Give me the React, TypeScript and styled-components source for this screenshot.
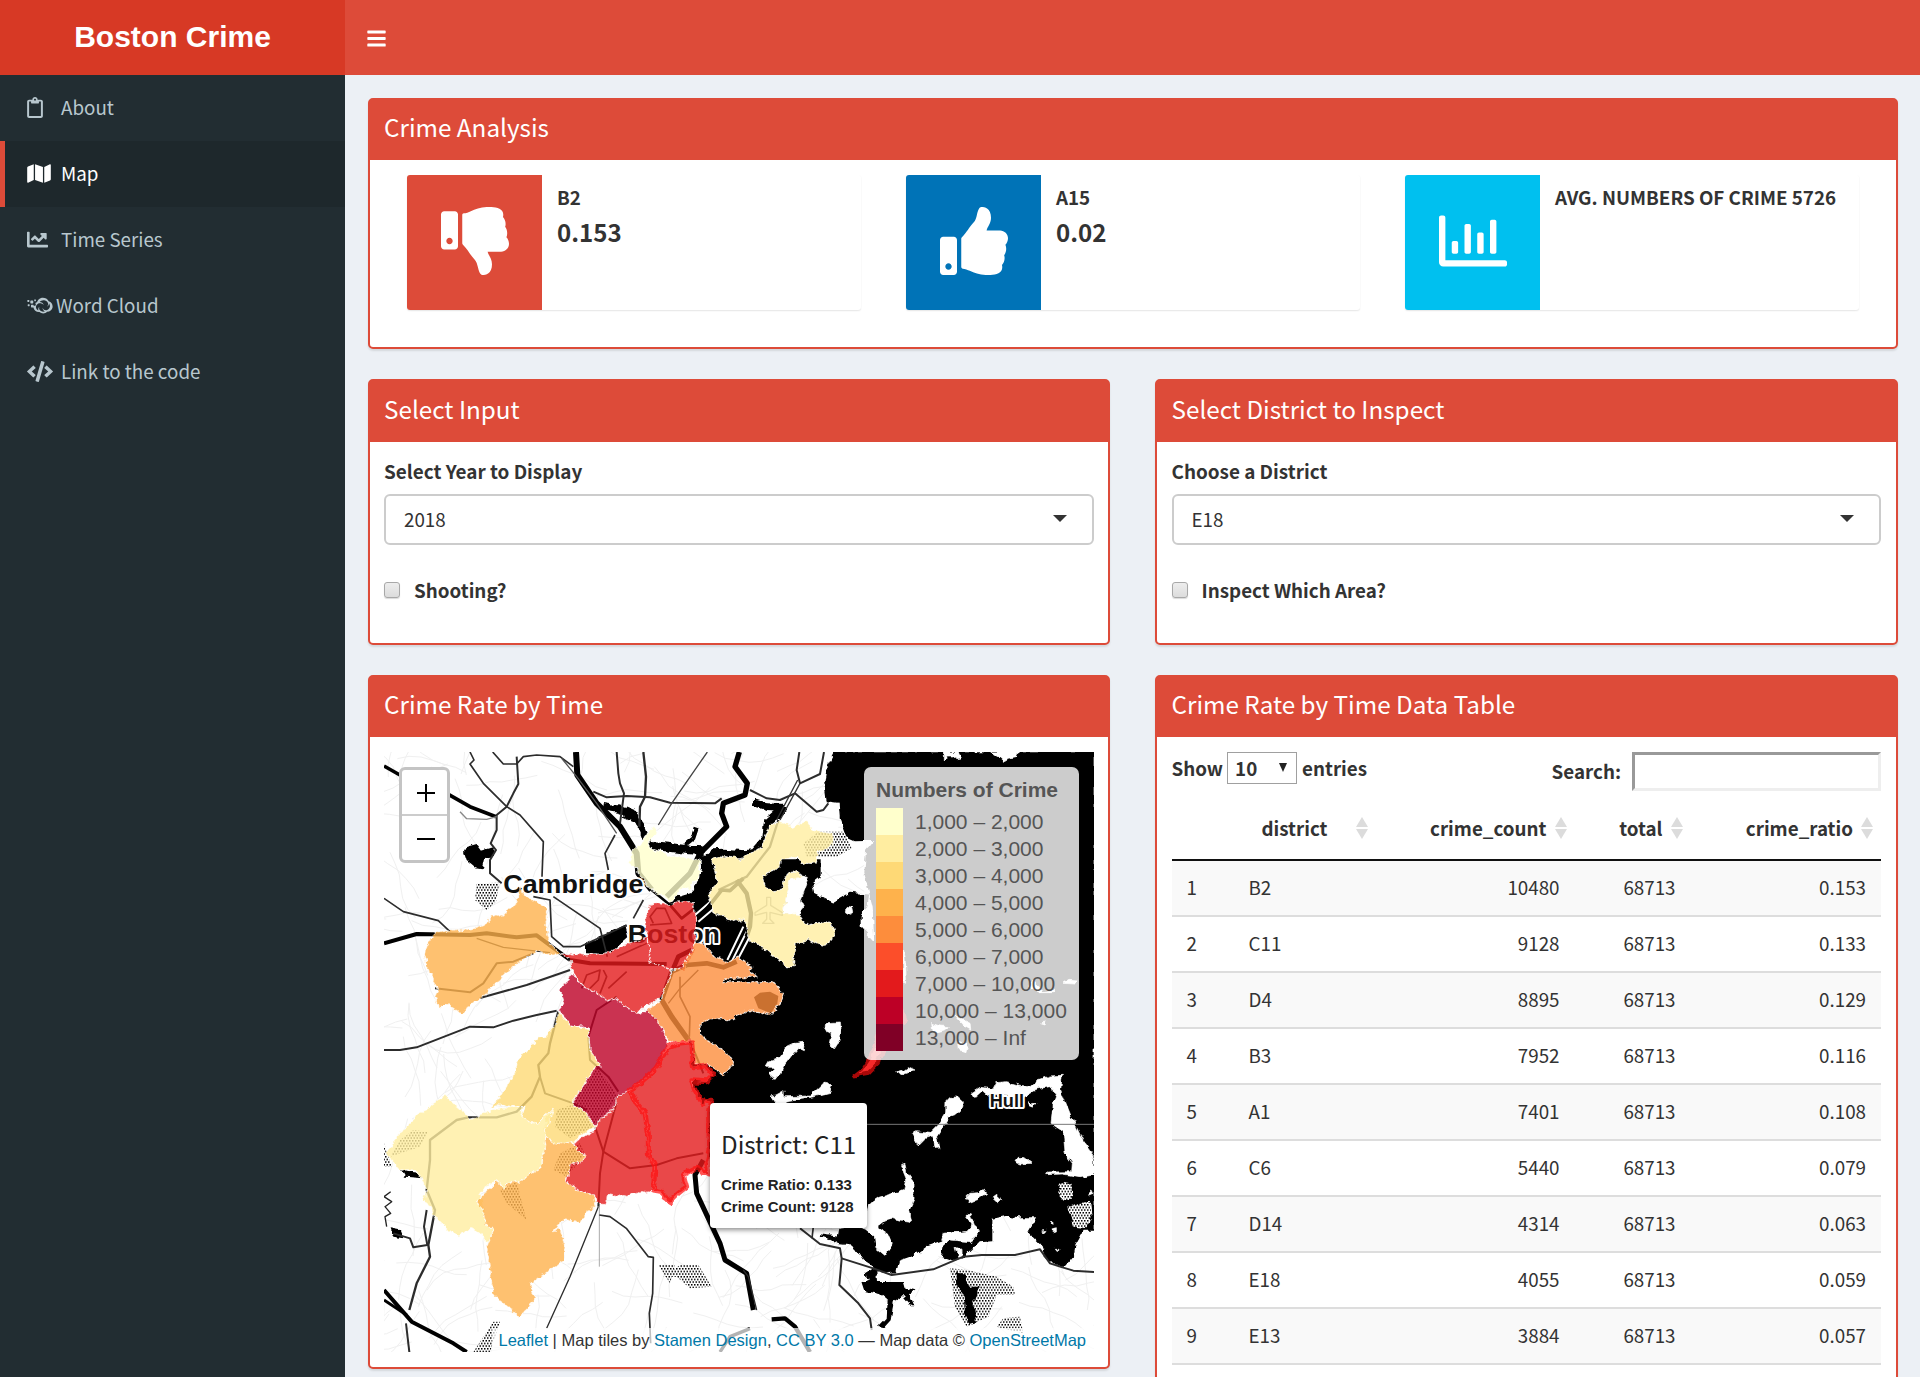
import React from "react";
import styled, { createGlobalStyle, css } from "styled-components";
import {
  FaBars,
  FaRegClipboard,
  FaMap,
  FaChartLine,
  FaCloudversify,
  FaCode,
  FaThumbsDown,
  FaThumbsUp,
  FaRegChartBar,
} from "react-icons/fa";

const sans = `"Source Sans Pro", "Noto Sans CJK SC", "Open Sans", sans-serif`;
const arial = `"Liberation Sans", Arial, sans-serif`;
const red = "#dd4b39";

const GlobalStyle = createGlobalStyle`
  *, *::before, *::after { box-sizing: border-box; }
  html, body { margin: 0; padding: 0; }
  body {
    height: 1377px;
    overflow: hidden;
    background: #ecf0f5;
    color: #333;
    font-family: ${sans};
    font-size: 18.8px;
    line-height: 30px;
  }
`;

const Page = styled.div`
  display: grid;
  grid-template-columns: 345px 1fr;
  grid-template-rows: 75px 1302px;
  width: 1920px;
  height: 1377px;
  overflow: hidden;
`;

const Logo = styled.div`
  display: flex;
  align-items: center;
  justify-content: center;
  padding-bottom: 2px;
  background: #d73925;
  color: #fff;
  font: bold 30px/73px ${arial};
`;

const Navbar = styled.header`
  display: flex;
  align-items: center;
  padding: 2px 0 0 22px;
  background: ${red};
  color: #fff;
  svg { width: 19px; height: 21px; }
`;

const Sidebar = styled.nav`
  background: #222d32;
`;

const MenuItem = styled.a<{ $active?: boolean }>`
  display: flex;
  align-items: center;
  height: 66px;
  padding: 0 0 2px 22px;
  border-left: 5px solid transparent;
  color: #b8c7ce;
  ${(p) => p.$active && css`
    background: #1e282c;
    border-left-color: ${red};
    color: #fff;
  `}
`;

const MenuIcon = styled.span<{ $w: number; $slot: number }>`
  display: flex;
  width: ${(p) => p.$slot}px;
  padding-top: 1px;
  svg { width: ${(p) => p.$w}px; height: 21px; }
`;

const Content = styled.main`
  display: flex;
  flex-direction: column;
  padding: 23px 22.5px 0;
`;

const Row = styled.section<{ $h: number; $mb: number }>`
  display: grid;
  grid-auto-flow: column;
  grid-auto-columns: minmax(0, 1fr);
  grid-template-rows: ${(p) => p.$h}px;
  gap: 45px;
  flex: none;
  height: ${(p) => p.$h}px;
  margin-bottom: ${(p) => p.$mb}px;
`;

const BoxFrame = styled.div<{ $tall?: boolean }>`
  display: flex;
  flex-direction: column;
  height: ${(p) => (p.$tall ? "780px" : "auto")};
  border: 2px solid ${red};
  border-radius: 5px;
  background: #fff;
  box-shadow: 0 2px 2px rgba(0, 0, 0, 0.1);
`;

const BoxTitle = styled.h3<{ $h: number }>`
  display: flex;
  align-items: center;
  flex: none;
  height: ${(p) => p.$h}px;
  margin: 0;
  padding: 0 14.5px 6px;
  background: ${red};
  color: #fff;
  font-weight: 400;
  font-size: 24.25px;
  line-height: 30px;
`;

const BoxBody = styled.div`
  flex: 1;
  padding: 15px 14.5px 0;
`;

const Cards = styled.div`
  display: grid;
  grid-template-columns: repeat(3, 454px);
  gap: 45px;
  padding: 0 22.5px 0 23px;
`;

const Card = styled.div`
  display: flex;
  height: 135px;
  border-radius: 3px;
  background: #fff;
  box-shadow: 0 1px 1.5px rgba(0, 0, 0, 0.1);
`;

const CardIcon = styled.div<{ $bg: string }>`
  display: flex;
  align-items: center;
  justify-content: center;
  flex: none;
  width: 135px;
  padding-bottom: 4px;
  border-radius: 3px 0 0 3px;
  background: ${(p) => p.$bg};
  color: #fff;
  svg { width: 68px; height: 68px; }
`;

const CardText = styled.div`
  display: flex;
  flex-direction: column;
  padding: 7px 0 0 15px;
  font-weight: 700;
  white-space: nowrap;
`;

const CardLabel = styled.span`
  font-size: 18.8px;
  line-height: 30px;
`;

const CardNumber = styled.span`
  font-size: 24.1px;
  line-height: 39px;
`;

const Label = styled.label`
  display: block;
  height: 30px;
  margin-bottom: 7px;
  font-size: 18.9px;
  font-weight: 700;
  line-height: 28px;
`;

const SelectBox = styled.div`
  display: flex;
  align-items: center;
  justify-content: space-between;
  height: 51px;
  padding: 0 25px 1px 18px;
  border: 2px solid #ccc;
  border-radius: 6px;
`;

const Caret = styled.span`
  width: 0;
  height: 0;
  margin-top: -2px;
  border: 7.5px solid transparent;
  border-top-color: #333;
  border-bottom-width: 0;
`;

const CheckRow = styled.label`
  display: flex;
  align-items: center;
  gap: 14px;
  margin-top: 30px;
  font-size: 18.8px;
  font-weight: 700;
`;

const CheckBox = styled.span`
  width: 16px;
  height: 16px;
  border: 1px solid #a8a8a8;
  border-radius: 3px;
  background: linear-gradient(#ededed, #dcdcdc);
  box-shadow: 0 1px 1px rgba(0, 0, 0, 0.15);
`;

const MapFrame = styled.div`
  position: relative;
  width: 710px;
  height: 600px;
  overflow: hidden;
`;

const ZoomControl = styled.div`
  position: absolute;
  left: 15px;
  top: 15px;
  display: flex;
  flex-direction: column;
  width: 51px;
  height: 96px;
  border: 3px solid #c4c4c4;
  border-radius: 6px;
  background: #fff;
`;

const ZoomButton = styled.span`
  display: flex;
  flex: 1;
  align-items: center;
  justify-content: center;
  padding: 2px 0 0 2px;
  & + & { border-top: 2px solid #ccc; }
`;

const Legend = styled.div`
  position: absolute;
  left: 480px;
  top: 15px;
  width: 215px;
  height: 293px;
  padding: 9px 12px;
  border-radius: 7px;
  background: rgba(255, 255, 255, 0.8);
  color: #555;
  font: 21px/27px ${arial};
  white-space: nowrap;
`;

const LegendTitle = styled.div`
  height: 32px;
  font-weight: 700;
`;

const LegendRow = styled.div<{ $c: string }>`
  display: flex;
  gap: 12px;
  height: 27px;
  &::before { content: ""; width: 27px; background: ${(p) => p.$c}; }
`;

const Tooltip = styled.div`
  position: absolute;
  left: 326px;
  top: 351px;
  width: 157px;
  height: 125px;
  padding: 22px 0 0 11px;
  border-radius: 4px;
  background: #fff;
  color: #222;
  box-shadow: 0 2px 5px rgba(0, 0, 0, 0.45);
  font: bold 15px/22px ${arial};
  white-space: nowrap;
  h4 {
    margin: 0 0 12px;
    font: 400 24.2px/37px ${sans};
  }
`;

const Attribution = styled.div`
  position: absolute;
  right: 0;
  bottom: 0;
  height: 24px;
  padding: 0 8px 0 6px;
  background: rgba(255, 255, 255, 0.7);
  color: #333;
  font: 16.5px/24px ${arial};
  white-space: nowrap;
  a { color: #0078a8; }
`;

const TableTools = styled.div`
  display: flex;
  justify-content: space-between;
  height: 54px;
  font-size: 18.8px;
  font-weight: 700;
`;

const LengthTool = styled.div`
  display: flex;
  align-items: center;
  height: 32px;
  line-height: 32px;
`;

const LengthSelect = styled.span`
  display: flex;
  align-items: center;
  justify-content: space-between;
  width: 70px;
  height: 32px;
  margin: 0 5px 0 4px;
  padding: 0 9px 0 7px;
  border: 1px solid #a0a0a0;
  &::after {
    content: "";
    margin-top: -1px;
    border: 4.5px solid transparent;
    border-top: 9px solid #222;
    border-bottom: 0;
  }
`;

const SearchTool = styled.div`
  display: flex;
  align-items: center;
  height: 39px;
  gap: 11px;
  line-height: 37px;
`;

const SearchLabel = styled.span`
  height: 39px;
`;

const SearchField = styled.span`
  width: 249px;
  height: 39px;
  border: 3px solid;
  border-color: #999 #eee #eee #999;
`;

const TableLine = styled.div<{ $odd?: boolean }>`
  display: grid;
  grid-template-columns: 62px 142px 199px 116px 1fr;
  height: 56px;
  padding-top: 10.5px;
  border-bottom: 2px solid #ddd;
  background: ${(p) => (p.$odd ? "#f9f9f9" : "#fff")};
`;

const HeadLine = styled(TableLine)`
  height: 55px;
  padding-top: 7px;
  border-bottom-color: #111;
  font-size: 18.8px;
  font-weight: 700;
`;

const Cell = styled.span<{ $right?: boolean }>`
  padding: 0 15px;
  text-align: ${(p) => (p.$right ? "right" : "left")};
`;

const HeadCell = styled.span`
  display: flex;
  justify-content: flex-end;
  gap: 8px;
  padding-right: 8px;
`;

const SortIcon = styled.i<{ $gap?: number }>`
  display: flex;
  flex-direction: column;
  gap: 2px;
  margin: 4px 0 0 ${(p) => p.$gap ?? 0}px;
  &::before, &::after { content: ""; border: 6px solid transparent; }
  &::before { border-top: 0; border-bottom: 10px solid #dcdcdc; }
  &::after { border-bottom: 0; border-top: 10px solid #dcdcdc; }
`;

const legend: [string, string][] = [
  ["#ffffcc", "1,000 – 2,000"],
  ["#ffeda0", "2,000 – 3,000"],
  ["#fed976", "3,000 – 4,000"],
  ["#feb24c", "4,000 – 5,000"],
  ["#fd8d3c", "5,000 – 6,000"],
  ["#fc4e2a", "6,000 – 7,000"],
  ["#e31a1c", "7,000 – 10,000"],
  ["#bd0026", "10,000 – 13,000"],
  ["#800026", "13,000 – Inf"],
];

const rows: [string, number, string][] = [
  ["B2", 10480, "0.153"],
  ["C11", 9128, "0.133"],
  ["D4", 8895, "0.129"],
  ["B3", 7952, "0.116"],
  ["A1", 7401, "0.108"],
  ["C6", 5440, "0.079"],
  ["D14", 4314, "0.063"],
  ["E18", 4055, "0.059"],
  ["E13", 3884, "0.057"],
];

/* Police district outlines, in map units (three per pixel). */
const districts: { id: string; fill: string; d: string }[] = [
  { id: "A15", fill: "#ffffcc", d: "M850 500 862 525 832 542 840 565 880 578 892 588 930 590 990 600 988 635 985 660 965 668 960 690 935 682 925 705 905 725 830 680 820 655 805 640 798 620 775 610 790 575 820 535Z" },
  { id: "A7", fill: "#ffeda0", d: "M1025 600 1050 588 1080 592 1110 600 1150 575 1175 560 1190 520 1205 490 1235 485 1270 500 1310 480 1328 510 1350 515 1385 520 1390 555 1345 575 1335 610 1300 610 1280 590 1235 595 1230 624 1178 648 1190 680 1215 695 1235 690 1245 655 1260 638 1280 635 1300 650 1260 660 1240 760 1285 762 1300 785 1315 795 1350 788 1385 790 1392 825 1375 850 1355 858 1315 840 1275 850 1270 920 1250 920 1200 880 1135 835 1130 810 1125 775 1090 785 1065 770 1045 768 1030 755 1015 700 1045 665Z" },
  { id: "A1", fill: "#e31a1c", d: "M840 735 870 728 900 735 925 726 970 725 980 780 975 820 975 860 955 900 940 930 905 930 835 905 840 870 830 835 825 780Z" },
  { id: "D4", fill: "#e31a1c", d: "M575 878 640 885 690 882 720 875 775 850 830 835 840 870 835 905 905 930 895 960 875 1010 830 1035 800 1060 770 1042 735 1015 715 1025 680 1000 640 980 605 930 600 900Z" },
  { id: "C6", fill: "#fd8d3c", d: "M975 850 1005 855 1035 890 1075 905 1100 892 1150 922 1140 930 1160 950 1065 957 1060 965 1210 965 1240 1000 1230 1025 1205 1065 1140 1048 1075 1082 1010 1075 990 1095 993 1125 1050 1165 1085 1195 1088 1215 1060 1245 1015 1212 975 1212 965 1140 900 1148 870 1100 830 1050 870 1025 890 965 905 935 935 922Z" },
  { id: "B2", fill: "#bd0026", d: "M605 940 570 990 580 1020 568 1050 600 1095 630 1098 655 1100 660 1170 675 1195 690 1215 670 1230 650 1260 625 1300 605 1330 640 1350 675 1400 700 1365 735 1350 740 1310 780 1290 815 1265 850 1235 875 1195 895 1150 860 1080 830 1050 800 1060 770 1042 735 1015 715 1025 680 1000 640 980Z" },
  { id: "D14", fill: "#feb24c", d: "M450 680 470 710 500 725 530 745 528 800 540 850 575 885 500 875 450 905 420 930 390 960 360 990 330 1020 300 1035 275 1062 235 1035 205 1040 195 1010 205 990 185 950 170 920 160 880 175 845 195 815 300 810 330 800 350 790 360 770 400 762 430 740 445 715Z" },
  { id: "E13", fill: "#fed976", d: "M570 1055 585 1080 600 1095 655 1105 660 1170 675 1195 690 1215 670 1230 650 1260 625 1300 605 1330 640 1350 675 1400 610 1445 560 1455 522 1430 530 1370 550 1345 500 1395 455 1370 465 1340 430 1340 385 1335 360 1345 400 1295 430 1245 445 1200 480 1160 505 1130 530 1130 545 1100 560 1090Z" },
  { id: "E5", fill: "#ffeda0", d: "M225 1305 260 1335 300 1380 345 1360 380 1345 460 1340 455 1370 500 1395 550 1345 525 1420 522 1480 515 1520 480 1540 450 1570 430 1562 400 1585 380 1560 350 1580 330 1600 345 1650 345 1690 370 1710 360 1745 345 1742 330 1720 305 1705 265 1732 230 1705 195 1670 180 1640 160 1620 170 1590 160 1560 135 1530 90 1530 50 1480 80 1430 120 1390 160 1350Z" },
  { id: "E18", fill: "#feb24c", d: "M380 1560 400 1585 430 1562 450 1570 480 1540 515 1520 522 1480 525 1430 560 1455 605 1445 620 1465 650 1490 635 1505 600 1515 590 1565 625 1590 670 1605 675 1640 655 1655 630 1685 580 1680 550 1715 565 1705 583 1740 585 1800 540 1830 480 1875 497 1915 480 1940 445 1970 410 1935 370 1905 360 1830 350 1760 370 1710 345 1690 345 1660 320 1625 345 1600Z" },
  { id: "B3", fill: "#e31a1c", d: "M780 1290 740 1310 735 1350 700 1365 675 1400 670 1415 610 1450 620 1465 650 1490 635 1505 600 1515 590 1565 625 1590 670 1605 680 1630 705 1630 715 1605 740 1610 780 1605 820 1595 850 1590 855 1520 835 1480 835 1420 825 1360 800 1330Z" },
];

const c11 =
  "M780 1290 815 1265 850 1235 870 1200 895 1160 925 1150 965 1145 970 1220 1005 1215 1030 1245 1010 1265 965 1262 975 1290 1000 1335 1005 1320 1025 1325 1018 1360 1020 1400 1020 1470 1010 1510 1015 1545 980 1525 940 1545 950 1580 925 1600 900 1625 885 1615 875 1595 850 1590 855 1520 835 1480 835 1420 825 1360 800 1330Z";

const water =
  "M1395 276H2172V1710L2140 1710 2115 1755 2110 1785 2085 1815 2055 1815 2025 1785 2015 1755 1975 1715 2002 1670 1950 1670 1910 1665 1865 1675 1865 1742 1825 1745 1782 1790 1750 1802 1715 1790 1720 1760 1750 1732 1815 1730 1800 1710 1720 1720 1715 1740 1670 1755 1630 1785 1585 1800 1578 1835 1545 1838 1520 1830 1522 1868 1560 1868 1600 1868 1605 1885 1632 1892 1615 1905 1628 1938 1600 1905 1570 1925 1560 1980 1540 2002 1528 2000 1552 1975 1555 1920 1530 1900 1488 1892 1480 1868 1508 1858 1485 1842 1515 1822 1480 1800 1450 1755 1405 1750 1380 1735 1350 1725 1405 1732 1410 1705 1450 1700 1485 1710 1510 1730 1515 1765 1545 1790 1570 1755 1555 1720 1525 1700 1550 1680 1480 1670 1300 1640 1020 1500 980 1320 960 1150 1000 1050 960 930 960 860 975 740 905 720 970 700 990 650 1000 595 1030 570 1060 568 1150 575 1150 650 1230 600 1350 600 1350 650 1325 670 1330 700 1390 730 1440 700 1495 705 1490 740 1470 765 1470 800 1515 850 1510 740 1485 640 1490 570 1515 540 1455 542 1430 530 1412 480 1408 430 1372 425 1365 370 1372 320Z";

/* Harbor islands and peninsulas. */
const islands = [
  "M1720 276 1720 300 1732 288 1748 288 1758 296 1772 294 1765 276Z",
  "M1862 276 1885 290 1900 304 1915 295 1938 290 1943 276Z",
  "M1430 742 1445 745 1448 758 1438 763 1426 755Z",
  "M1600 870 1605 890 1610 970 1600 965Z",
  "M2080 970 2100 958 2122 960 2115 972Z",
  "M1985 960 1998 975 2020 995 2050 990 2052 998 2010 998 1975 980Z",
  "M1362 1098 1372 1088 1408 1086 1410 1110 1407 1145 1393 1167 1380 1155 1387 1120 1372 1115Z",
  "M1188 1222 1200 1202 1228 1192 1250 1160 1272 1150 1300 1147 1308 1160 1306 1172 1285 1163 1270 1180 1240 1220 1228 1252 1215 1255 1195 1240 1215 1222Z",
  "M1203 1308 1218 1305 1242 1292 1243 1310 1320 1308 1345 1285 1362 1268 1385 1278 1380 1297 1330 1310 1245 1323 1250 1345 1220 1335Z",
  "M1580 1235 1605 1228 1615 1220 1635 1230 1605 1238 1600 1245Z",
  "M1728 1325 1740 1312 1765 1311 1780 1325 1778 1345 1760 1362 1738 1370 1722 1400 1703 1430 1710 1468 1695 1455 1688 1428 1665 1435 1645 1455 1628 1422 1640 1415 1680 1420 1705 1395 1727 1360Z",
  "M1805 1298 1830 1282 1870 1287 1880 1268 1910 1265 1945 1275 1980 1280 2005 1260 2040 1248 2077 1246 2072 1290 2100 1360 2140 1445 2172 1490 2172 1542 2130 1550 2080 1542 2030 1544 2035 1536 2105 1535 2107 1510 2085 1480 2080 1415 2043 1390 2050 1330 2060 1300 2035 1280 1990 1290 1960 1310 1855 1305 1840 1292 1820 1310 1810 1312Z",
  "M1935 1505 1945 1492 1965 1493 1987 1510 1950 1512Z",
  "M1788 1610 1800 1600 1825 1598 1842 1586 1850 1600 1825 1618 1800 1628Z",
  "M1868 1615 1880 1606 1892 1618 1882 1628Z",
  "M1488 1665 1496 1635 1530 1612 1570 1600 1604 1588 1610 1560 1600 1535 1590 1515 1605 1510 1610 1535 1632 1565 1632 1620 1618 1650 1625 1685 1560 1675 1530 1685 1510 1690 1492 1685Z",
  "M1715 1738 1720 1720 1790 1715 1808 1695 1790 1668 1800 1660 1815 1700 1828 1710 1815 1735 1800 1745Z",
  "M1755 1762 1775 1770 1778 1790 1765 1795Z",
  "M1260 655 1280 645 1315 652 1290 720 1302 745 1285 765 1240 760Z",
  "M1685 1090 1710 1098 1732 1100 1720 1110 1690 1118Z",
  "M1755 1065 1780 1080 1800 1090 1802 1110 1785 1100Z",
  "M1765 1140 1790 1150 1785 1175 1768 1170Z",
  "M2012 1088 2028 1086 2025 1092Z",
  "M2158 1590 2172 1600 2160 1605Z",
  "M1975 1325 1985 1332 1998 1328 1990 1342 1978 1338Z",
  "M2045 1684 2052 1684 2052 1692 2044 1692ZM2048 1710 2062 1706 2062 1713 2050 1716ZM2015 1713 2028 1711 2024 1717ZM2056 1765 2064 1765 2062 1772Z",
];

const creeks: [number, string][] = [
  [26, "M1245 440 1195 485 1190 535 1150 580 1080 590 1035 580"],
  [20, "M1150 428 1190 440 1245 442"],
  [26, "M835 555 900 562 960 570 995 572"],
  [12, "M945 555 970 535 980 505"],
  [22, "M700 440 750 448 790 465 815 500 832 545"],
  [34, "M765 455 800 470"],
  [14, "M995 560 1000 620"],
];

const ponds = [
  "M645 852 765 795 775 832 742 860 718 882 645 880Z",
  "M282 575 290 560 320 552 335 572 375 560 372 580 345 598 338 628 320 625 290 600Z",
  "M88 1520 120 1535 160 1540 160 1555 105 1550Z",
  "M895 706 930 708 950 735 940 765 905 735Z",
  "M62 1705 90 1710 100 1735 70 1730Z",
  "M1760 1840 1785 1840 1790 1880 1825 1880 1825 1900 1810 1920 1818 1990 1800 1995 1785 1960 1780 1900 1762 1880Z",
];

const roads: [number, string, string?][] = [
  [11, "M42 318 95 348 230 400 300 440 378 470"],
  [12, "M42 850 140 822 300 825 350 820 440 832 500 826 545 860 600 900 660 910 890 912"],
  [18, "M618 276 622 345 680 430 750 500 800 580 805 640 845 690"],
  [8, "M845 690 900 735 935 775 980 740"],
  [16, "M1108 276 1095 320 1132 370 1125 405 1060 430 1055 460 1070 500 990 580 960 640 890 710"],
  [5, "M300 276 312 300 300 312 340 370 410 440 450 465 520 545 516 650"],
  [5, "M368 276 400 312 440 312 460 290 500 285 570 290 610 320"],
  [6, "M440 290 445 372 430 400 410 440 380 465 380 510 362 550 378 570 360 600 360 640 395 670"],
  [4, "M380 470 350 478 290 476 270 455", "#888"],
  [4, "M575 295 620 350 680 430 740 520", "#555"],
  [6, "M740 276 745 340 750 370 762 400 750 490"],
  [7, "M820 276 828 350 825 410 810 440 808 500"],
  [6, "M670 395 710 412 770 408 840 412 900 428 1035 430 1055 415"],
  [4, "M1012 276 905 430 865 495", "#444"],
  [5, "M735 525 705 580 715 630"],
  [5, "M490 710 540 720 545 830 580 860 630 860 770 795"],
  [5, "M550 710 690 805 712 890"],
  [5, "M820 720 790 775"],
  [5, "M42 715 100 755 205 782 240 815"],
  [6, "M42 1170 90 1170 140 1162 300 1100 370 1102 430 1082 500 1065 560 1052"],
  [6, "M330 1014 470 975 600 930"],
  [6, "M195 985 300 997 340 970 380 910 430 905 490 880"],
  [4, "M320 835 400 862 540 878"],
  [7, "M565 1055 540 1150 535 1180 505 1215 510 1250 485 1310 440 1355 380 1372 295 1372 260 1380 180 1440 180 1500 170 1590 195 1650 175 1755 180 1790 140 1870 118 1950"],
  [6, "M510 1250 525 1300 610 1330 650 1350"],
  [6, "M170 1650 162 1700 172 1755 130 1762 120 1735 70 1720"],
  [12, "M42 1890 125 1985 250 2050 290 2076"],
  [9, "M42 1920 110 1965"],
  [6, "M108 1990 118 2076"],
  [4, "M685 1640 600 1850 530 2005"],
  [3, "M688 1600 688 1820", "#aaa"],
  [5, "M688 1665 720 1670 770 1706 835 1790 850 1792 848 1900 838 1960 842 2050"],
  [6, "M675 1400 700 1475 690 1540 685 1640"],
  [6, "M740 1325 700 1475 780 1525 860 1515 920 1495 1000 1480"],
  [6, "M745 1295 715 1250 660 1200 655 1130 680 1050 740 1010"],
  [16, "M875 1020 905 1070 955 1140"],
  [6, "M955 1130 1000 1240"],
  [15, "M1000 1500 975 1545 980 1600 1050 1750 1065 1800 1130 1840 1150 1950"],
  [14, "M875 1020 905 935 950 915 1010 910 1060 922 1100 905"],
  [14, "M910 925 925 890 965 870"],
  [5, "M930 950 930 1010 960 1070 958 1130"],
  [4, "M985 930 930 985 895 1030"],
  [4, "M1120 1830 1135 1850 1160 1950"],
  [13, "M1205 1978 1245 1975 1275 2000 1320 2076"],
  [10, "M1050 2076 1080 2030 1140 2006"],
  [6, "M1290 1705 1350 1752 1410 1765 1415 1795 1408 1875 1465 1930 1500 1975 1505 2010"],
  [5, "M1330 1700 1326 1735"],
  [6, "M1415 1795 1510 1825 1565 1845 1690 1828 1780 1790 1835 1785 1935 1785 2010 1768 2040 1810 2070 1820 2110 1832 2172 1836"],
  [6, "M1288 276 1280 330 1290 370 1350 342 1362 276"],
  [6, "M1140 390 1190 415 1230 420 1275 400 1340 455 1360 450 1375 430"],
  [4, "M1290 370 1230 480", "#333"],
  [4, "M1283 360 1220 480", "#333"],
  [7, "M1225 480 1200 560 1130 650 1045 690"],
  [11, "M1000 760 1055 690 1080 692 1120 655"],
  [13, "M1100 660 1130 700 1143 760 1140 800 1130 830"],
  [3, "M1490 1393 2172 1393", "#777"],
];

/* Bridges, tunnels and piers drawn light over the harbor. */
const bridges = "M975 765 1050 700M985 785 1050 730M1072 900 1120 800M1085 905 1130 815M1098 908 1142 825";
const piers = "M1020 858 1030 878M1030 862 1042 884M1042 866 1054 888M1054 870 1066 892";

const dotFields = [
  "M320 670 388 668 378 725 350 750 315 720Z",
  "M1345 515 1420 515 1445 565 1400 590 1310 590 1300 550Z",
  "M865 1815 915 1815 900 1870Z M930 1815 985 1815 1025 1880 960 1885 920 1850 880 1850Z",
  "M370 1985 390 1985 360 2076 310 2076Z",
  "M42 1450 65 1520 42 1520Z",
  "M1740 1825 1790 1830 1880 1850 1930 1880 1935 1905 1880 1905 1855 1970 1790 2000 1755 1940Z",
  "M1900 1975 1950 1970 1960 2020 1880 2000Z",
  "M640 1280 680 1220 745 1310 675 1400 610 1330Z",
  "M560 1350 620 1330 670 1400 600 1435 555 1400Z",
  "M130 1410 175 1415 150 1460 60 1490 90 1440Z",
  "M390 1590 440 1565 470 1680 410 1630Z",
  "M570 1480 630 1450 645 1485 590 1550 550 1530Z",
];

const dotIslands = [
  "M2065 1575 2080 1565 2100 1570 2110 1590 2105 1620 2085 1620 2065 1598Z",
  "M2092 1640 2120 1630 2160 1625 2165 1670 2150 1705 2110 1700Z",
];

/* Local streets: a repeatable scatter of faint meandering lines. */
const streets = (() => {
  let seed = 7;
  const rnd = () => {
    seed = (seed * 16807) % 2147483647;
    return seed / 2147483647;
  };
  const out: string[] = [];
  for (let i = 0; i < 520; i++) {
    let x = 42 + rnd() * 2130;
    let y = 276 + rnd() * 1800;
    let a = rnd() * Math.PI * 2;
    let d = `M${x.toFixed(0)} ${y.toFixed(0)}`;
    for (let k = 0; k < 6; k++) {
      a += (rnd() - 0.5) * 0.7;
      x += Math.cos(a) * 36;
      y += Math.sin(a) * 36;
      d += `L${x.toFixed(0)} ${y.toFixed(0)}`;
    }
    out.push(d);
  }
  return out.join("");
})();

function CrimeMap() {
  return (
    <svg width="710" height="600" viewBox="42 276 2130 1800" display="block">
      <defs>
        <pattern id="dots" width="9" height="16" patternUnits="userSpaceOnUse">
          <rect width="4.5" height="4.5" fill="#000" />
          <rect x="4.5" y="8" width="4.5" height="4.5" fill="#000" />
        </pattern>
        <filter id="coast" filterUnits="userSpaceOnUse" x="0" y="230" width="2220" height="1900" colorInterpolationFilters="sRGB">
          <feTurbulence type="fractalNoise" baseFrequency="0.045" numOctaves="2" seed="4" />
          <feDisplacementMap in="SourceGraphic" scale="18" xChannelSelector="R" yChannelSelector="G" />
        </filter>
      </defs>
      <rect x="42" y="276" width="2130" height="1800" fill="#fff" />
      <path d={streets} fill="none" stroke="#f0f0f0" strokeWidth="3" />
      <g filter="url(#coast)">
        <path d={water} stroke="#000" strokeWidth="4" />
        {creeks.map(([w, d]) => (
          <path key={d} d={d} fill="none" stroke="#000" strokeWidth={w} />
        ))}
        {ponds.map((d) => (
          <path key={d} d={d} />
        ))}
        <g fill="#fff">
          {islands.map((d) => (
            <path key={d} d={d} stroke="#fff" strokeWidth="2" />
          ))}
          {dotIslands.map((d) => (
            <path key={d} d={d} />
          ))}
          {districts.map((s) => (
            <path key={s.id} d={s.d} />
          ))}
          <path d={c11} />
        </g>
        <path d="M972 1272 995 1274 992 1318 978 1295Z" />
      </g>
      <g fill="none" strokeLinejoin="round">
        <path d={bridges} stroke="#fff" strokeWidth="6" />
        <path d={piers} stroke="#000" strokeWidth="5" />
        {roads.map(([w, d, c]) => (
          <path key={d} d={d} stroke={c ?? (w < 8 ? "#2c2c2c" : "#000")} strokeWidth={w} />
        ))}
        <path d="M850 790 840 770 860 745 885 745 905 790 840 795M635 985 650 945 690 930 685 960 660 985M700 930 710 950 690 1000M770 935 715 985M740 890 830 850" stroke="#333" strokeWidth="5" />
        <path d="M50 1700 45 1670 62 1660 45 1640 65 1625 42 1610 62 1595" stroke="#222" strokeWidth="4" />
        <path d="M1190 712V736L1155 758V766L1190 757V778L1178 790H1212L1200 778V757L1237 766V758L1202 736V712Z" stroke="#999" strokeWidth="4" />
      </g>
      <path d="M1152 1012 1170 998 1200 995 1225 1008 1222 1030 1203 1060 1165 1045Z" />
      {[...dotFields, ...dotIslands].map((d) => (
        <path key={d} d={d} fill="url(#dots)" />
      ))}
      <g
        fontFamily="Liberation Sans, Arial, sans-serif"
        fontWeight="bold"
        fontSize="77"
        fill="#111"
        stroke="#fff"
        strokeWidth="12"
        strokeLinejoin="round"
        paintOrder="stroke"
      >
        <text x="400" y="698" textLength="420" lengthAdjust="spacingAndGlyphs">Cambridge</text>
        <text x="773" y="850" textLength="277" lengthAdjust="spacingAndGlyphs">Boston</text>
        <text x="1859" y="1340" fontSize="56" textLength="103" lengthAdjust="spacingAndGlyphs">Hull</text>
      </g>
      <g filter="url(#coast)">
        {districts.map((s) => (
          <path
            key={s.id}
            d={s.d}
            fill={s.fill}
            fillOpacity=".8"
            stroke="#fff"
            strokeOpacity=".75"
            strokeWidth="4"
            strokeDasharray="9 5"
          />
        ))}
        <path d={c11} fill="#e31a1c" fillOpacity=".8" stroke="#ff1010" strokeOpacity=".72" strokeWidth="15" strokeLinejoin="round" />
        <path
          d="M1450 1248 1475 1228 1500 1190 1530 1110 1595 1050 1605 1080 1560 1140 1530 1190 1525 1210 1495 1240Z"
          fill="#f52a2a"
          stroke="#a80808"
          strokeWidth="9"
        />
      </g>
    </svg>
  );
}

function Box({ title, h = 60, tall, children }: { title: string; h?: number; tall?: boolean; children: React.ReactNode }) {
  return (
    <BoxFrame $tall={tall}>
      <BoxTitle $h={h}>{title}</BoxTitle>
      <BoxBody>{children}</BoxBody>
    </BoxFrame>
  );
}

function InputBox({ title, label, value, check }: { title: string; label: string; value: string; check: string }) {
  return (
    <Box title={title} h={61}>
      <Label>{label}</Label>
      <SelectBox>
        {value}
        <Caret />
      </SelectBox>
      <CheckRow>
        <CheckBox />
        {check}
      </CheckRow>
    </Box>
  );
}

export default function App() {
  return (
    <Page>
      <GlobalStyle />
      <Logo>Boston Crime</Logo>
      <Navbar>
        <FaBars />
      </Navbar>
      <Sidebar>
        <MenuItem>
          <MenuIcon $w={16} $slot={34}><FaRegClipboard /></MenuIcon>About
        </MenuItem>
        <MenuItem $active>
          <MenuIcon $w={24} $slot={34}><FaMap /></MenuIcon>Map
        </MenuItem>
        <MenuItem>
          <MenuIcon $w={21} $slot={34}><FaChartLine /></MenuIcon>Time Series
        </MenuItem>
        <MenuItem>
          <MenuIcon $w={26} $slot={29}><FaCloudversify /></MenuIcon>Word Cloud
        </MenuItem>
        <MenuItem>
          <MenuIcon $w={26} $slot={34}><FaCode /></MenuIcon>Link to the code
        </MenuItem>
      </Sidebar>
      <Content>
        <Row $h={251} $mb={30}>
          <Box title="Crime Analysis">
            <Cards>
              <Card>
                <CardIcon $bg={red}><FaThumbsDown /></CardIcon>
                <CardText>
                  <CardLabel>B2</CardLabel>
                  <CardNumber>0.153</CardNumber>
                </CardText>
              </Card>
              <Card>
                <CardIcon $bg="#0073b7"><FaThumbsUp /></CardIcon>
                <CardText>
                  <CardLabel>A15</CardLabel>
                  <CardNumber>0.02</CardNumber>
                </CardText>
              </Card>
              <Card>
                <CardIcon $bg="#00c0ef"><FaRegChartBar /></CardIcon>
                <CardText>
                  <CardLabel>AVG. NUMBERS OF CRIME 5726</CardLabel>
                </CardText>
              </Card>
            </Cards>
          </Box>
        </Row>
        <Row $h={266} $mb={30}>
          <InputBox title="Select Input" label="Select Year to Display" value="2018" check="Shooting?" />
          <InputBox title="Select District to Inspect" label="Choose a District" value="E18" check="Inspect Which Area?" />
        </Row>
        <Row $h={694} $mb={0}>
          <Box title="Crime Rate by Time">
            <MapFrame>
              <CrimeMap />
              <ZoomControl>
                <ZoomButton>
                  <svg width="18" height="18"><path d="M0 9H18M9 0V18" stroke="#000" strokeWidth="2" /></svg>
                </ZoomButton>
                <ZoomButton>
                  <svg width="18" height="18"><path d="M0 9H18" stroke="#000" strokeWidth="2" /></svg>
                </ZoomButton>
              </ZoomControl>
              <Legend>
                <LegendTitle>Numbers of Crime</LegendTitle>
                {legend.map(([c, t]) => (
                  <LegendRow key={t} $c={c}>{t}</LegendRow>
                ))}
              </Legend>
              <Tooltip>
                <h4>District: C11</h4>
                <div>Crime Ratio: 0.133</div>
                <div>Crime Count: 9128</div>
              </Tooltip>
              <Attribution>
                <a>Leaflet</a> | Map tiles by <a>Stamen Design</a>, <a>CC BY 3.0</a> — Map data © <a>OpenStreetMap</a>
              </Attribution>
            </MapFrame>
          </Box>
          <Box title="Crime Rate by Time Data Table" tall>
            <TableTools>
              <LengthTool>
                Show<LengthSelect>10</LengthSelect>entries
              </LengthTool>
              <SearchTool>
                <SearchLabel>Search:</SearchLabel>
                <SearchField />
              </SearchTool>
            </TableTools>
            <HeadLine>
              <span />
              <HeadCell>district<SortIcon $gap={20} /></HeadCell>
              <HeadCell>crime_count<SortIcon /></HeadCell>
              <HeadCell>total<SortIcon /></HeadCell>
              <HeadCell>crime_ratio<SortIcon /></HeadCell>
            </HeadLine>
            {rows.map(([id, n, ratio], i) => (
              <TableLine key={id} $odd={i % 2 === 0}>
                <Cell>{i + 1}</Cell>
                <Cell>{id}</Cell>
                <Cell $right>{n}</Cell>
                <Cell $right>68713</Cell>
                <Cell $right>{ratio}</Cell>
              </TableLine>
            ))}
          </Box>
        </Row>
      </Content>
    </Page>
  );
}
